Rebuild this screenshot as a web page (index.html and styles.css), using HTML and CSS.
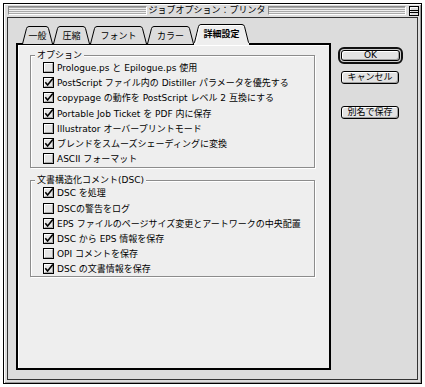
FILE: index.html
```html
<!DOCTYPE html>
<html lang="ja">
<head>
<meta charset="utf-8">
<link rel="stylesheet" href="styles.css">
</head>
<body>
<svg class="defs" width="0" height="0" aria-hidden="true">
  <defs>
    <symbol id="box" viewBox="0 0 11 11">
      <rect x="0.5" y="0.5" width="10" height="10" fill="#e4e4e4" stroke="#000"/>
      <path d="M1.5 9.5 V1.5 H9.5" fill="none" stroke="#fff"/>
      <path d="M1.5 9.5 H9.5 V1.5" fill="none" stroke="#a8a8a8"/>
    </symbol>
    <symbol id="chk" viewBox="0 0 11 11">
      <rect x="0.5" y="0.5" width="10" height="10" fill="#e4e4e4" stroke="#000"/>
      <path d="M1.5 9.5 V1.5 H9.5" fill="none" stroke="#fff"/>
      <path d="M1.5 9.5 H9.5 V1.5" fill="none" stroke="#a8a8a8"/>
      <path d="M2.3 5.2 L4.6 8 L9.8 1.6" fill="none" stroke="#000" stroke-width="1.6"/>
    </symbol>
  </defs>
</svg>
<div class="window">
  <div class="titlebar">
    <div class="stripe"></div>
    <div class="title">ジョブオプション：プリンタ</div>
    <div class="stripe"></div>
    <svg class="shade" width="10" height="10" viewBox="0 0 10 10">
      <rect x="0.5" y="0.5" width="9" height="9" fill="#ddd" stroke="#000"/>
      <path d="M1.5 8.5 V1.5 H8.5" fill="none" stroke="#fff"/>
      <path d="M1 4.5 H9 M1 6.5 H9" stroke="#000"/>
    </svg>
  </div>
  <div class="content">
    <div class="main">
      <div class="tabs">
        <div class="tab t1">
          <svg class="tabshape" width="31" height="18" viewBox="0 0 31 18"><path d="M0.5 18 L4.5 2.5 Q5 0.5 7 0.5 H24 Q26 0.5 26.5 2.5 L30.5 18" fill="#dcdcdc" stroke="#000"/></svg>
          <span>一般</span>
        </div>
        <div class="tab t2">
          <svg class="tabshape" width="37" height="18" viewBox="0 0 37 18"><path d="M0.5 18 L4.5 2.5 Q5 0.5 7 0.5 H30 Q32 0.5 32.5 2.5 L36.5 18" fill="#dcdcdc" stroke="#000"/></svg>
          <span>圧縮</span>
        </div>
        <div class="tab t3">
          <svg class="tabshape" width="57" height="18" viewBox="0 0 57 18"><path d="M0.5 18 L4.5 2.5 Q5 0.5 7 0.5 H50 Q52 0.5 52.5 2.5 L56.5 18" fill="#dcdcdc" stroke="#000"/></svg>
          <span>フォント</span>
        </div>
        <div class="tab t4">
          <svg class="tabshape" width="47" height="18" viewBox="0 0 47 18"><path d="M0.5 18 L4.5 2.5 Q5 0.5 7 0.5 H40 Q42 0.5 42.5 2.5 L46.5 18" fill="#dcdcdc" stroke="#000"/></svg>
          <span>カラー</span>
        </div>
        <div class="tab t5 active">
          <svg class="tabshape" width="55" height="21" viewBox="0 0 55 21"><path d="M0 21 V19 H0.5 L4.5 2.5 Q5 0.5 7 0.5 H48 Q50 0.5 50.5 2.5 L54.5 19 H55 V21 Z" fill="#eeeeee"/><path d="M0 18.5 H0.5 L4.5 2.5 Q5 0.5 7 0.5 H48 Q50 0.5 50.5 2.5 L54.5 18.5 H55" fill="none" stroke="#000"/><path d="M1.8 20 L5.6 3 Q6 1.5 7.5 1.5 H47.5" fill="none" stroke="#fff"/></svg>
          <span>詳細設定</span>
        </div>
      </div>
      <div class="panel">
        <fieldset class="group g1">
          <legend>オプション</legend>
          <div class="rows">
            <div class="row"><svg class="cb"><use href="#box"/></svg><span>Prologue.ps と Epilogue.ps 使用</span></div>
            <div class="row"><svg class="cb"><use href="#chk"/></svg><span>PostScript ファイル内の Distiller パラメータを優先する</span></div>
            <div class="row"><svg class="cb"><use href="#chk"/></svg><span>copypage の動作を PostScript レベル 2 互換にする</span></div>
            <div class="row"><svg class="cb"><use href="#chk"/></svg><span>Portable Job Ticket を PDF 内に保存</span></div>
            <div class="row"><svg class="cb"><use href="#box"/></svg><span>Illustrator オーバープリントモード</span></div>
            <div class="row"><svg class="cb"><use href="#chk"/></svg><span>ブレンドをスムーズシェーディングに変換</span></div>
            <div class="row"><svg class="cb"><use href="#box"/></svg><span>ASCII フォーマット</span></div>
          </div>
        </fieldset>
        <fieldset class="group g2">
          <legend>文書構造化コメント(DSC)</legend>
          <div class="rows">
            <div class="row"><svg class="cb"><use href="#chk"/></svg><span>DSC を処理</span></div>
            <div class="row"><svg class="cb"><use href="#box"/></svg><span>DSCの警告をログ</span></div>
            <div class="row"><svg class="cb"><use href="#chk"/></svg><span>EPS ファイルのページサイズ変更とアートワークの中央配置</span></div>
            <div class="row"><svg class="cb"><use href="#chk"/></svg><span>DSC から EPS 情報を保存</span></div>
            <div class="row"><svg class="cb"><use href="#box"/></svg><span>OPI コメントを保存</span></div>
            <div class="row"><svg class="cb"><use href="#chk"/></svg><span>DSC の文書情報を保存</span></div>
          </div>
        </fieldset>
      </div>
    </div>
    <div class="side">
      <div class="ring"><div class="btn">OK</div></div>
      <div class="btn plain cancel">キャンセル</div>
      <div class="btn plain saveas">別名で保存</div>
    </div>
  </div>
</div>
</body>
</html>
```

FILE: styles.css
```css
* { box-sizing: border-box; }
html, body { margin: 0; padding: 0; }
body {
  background: #ffffff;
  width: 425px;
  height: 387px;
  overflow: hidden;
  font-family: "DejaVu Sans", "Noto Sans CJK JP", sans-serif;
  font-size: 9px;
  color: #000;
}
.defs { position: absolute; width: 0; height: 0; }

.window {
  margin: 3px 0 0 3px;
  width: 419px;
  height: 381px;
  border: 1px solid #000;
  background: #dcdcdc;
  box-shadow: inset 1px 1px 0 #fff, inset -1px -1px 0 #9a9a9a;
  display: flex;
  flex-direction: column;
}

.titlebar {
  height: 13px;
  display: flex;
  align-items: center;
  padding: 0 2px 0 4px;
}
.stripe {
  flex: 1;
  height: 9px;
  border-top: 1px solid #8a8a8a;
  border-left: 1px solid #8a8a8a;
  border-bottom: 1px solid #fff;
  border-right: 1px solid #fff;
  background: repeating-linear-gradient(to bottom, #a9a9a9 0 1px, #eeeeee 1px 2px);
}
.title {
  padding: 0 2px;
  line-height: 13px;
  font-size: 9px;
  white-space: nowrap;
}
.shade { margin-left: 3px; display: block; }

.content {
  flex: 1;
  margin: 0 3px 3px 3px;
  border: 1px solid #333;
  background: #dcdcdc;
  display: flex;
}

.main {
  padding: 8px 0 0 8px;
  display: flex;
  flex-direction: column;
}

.tabs {
  display: flex;
  align-items: flex-end;
  padding-left: 6px;
  height: 19px;
  margin-bottom: -2px;
  position: relative;
  z-index: 1;
}
.tab {
  position: relative;
  height: 18px;
  display: flex;
  align-items: center;
  justify-content: center;
  margin-bottom: 1px;
}
.tab span {
  position: relative;
  line-height: 12px;
  padding-top: 2px;
}
.tabshape { position: absolute; left: 0; top: 0; }
.t1 { width: 31px; }
.t2 { width: 37px; }
.t3 { width: 57px; }
.t4 { width: 47px; }
.t5 { width: 55px; }
.tab.active { height: 21px; margin-bottom: 0; padding-bottom: 3px; }
.tab.active span { font-weight: bold; }

.panel {
  width: 315px;
  height: 327px;
  border: 2px solid #000;
  background: #eeeeee;
  box-shadow: inset 1px 1px 0 #fff;
  padding: 5px 14px 0 12px;
}

.group {
  margin: 0;
  padding: 0;
  min-width: 0;
  border: 1px solid #8c8c8c;
  box-shadow: 1px 1px 0 #fff, inset 1px 1px 0 #fff;
}
.group legend {
  margin-left: 4px;
  padding: 0 2px;
  line-height: 10px;
  font-size: 9px;
  background: #eeeeee;
}
.g2 { margin-top: 7px; }
.rows { padding: 0 0 1px 12px; }
.g2 .rows { padding-bottom: 0; }
.row {
  height: 15.2px;
  display: flex;
  align-items: center;
  gap: 3px;
  white-space: nowrap;
}
.cb { width: 11px; height: 11px; flex: none; display: block; }

.side {
  margin-left: 7px;
  padding-top: 29px;
  width: 66px;
  display: flex;
  flex-direction: column;
}
.ring {
  width: 65px;
  height: 17px;
  border: 2px solid #111;
  border-radius: 6px;
  padding: 1px;
  background: #cfcfcf;
}
.btn {
  height: 11px;
  border: 1px solid #000;
  border-radius: 3px;
  background: #e2e2e2;
  box-shadow: inset 1px 1px 0 #fff, inset -1px -1px 0 #a0a0a0;
  display: flex;
  align-items: center;
  justify-content: center;
  line-height: 9px;
  font-size: 9px;
}
.btn.plain {
  margin-left: 3px;
  width: 58px;
  height: 13px;
}
.cancel { margin-top: 7px; }
.saveas { margin-top: 22px; }
```
